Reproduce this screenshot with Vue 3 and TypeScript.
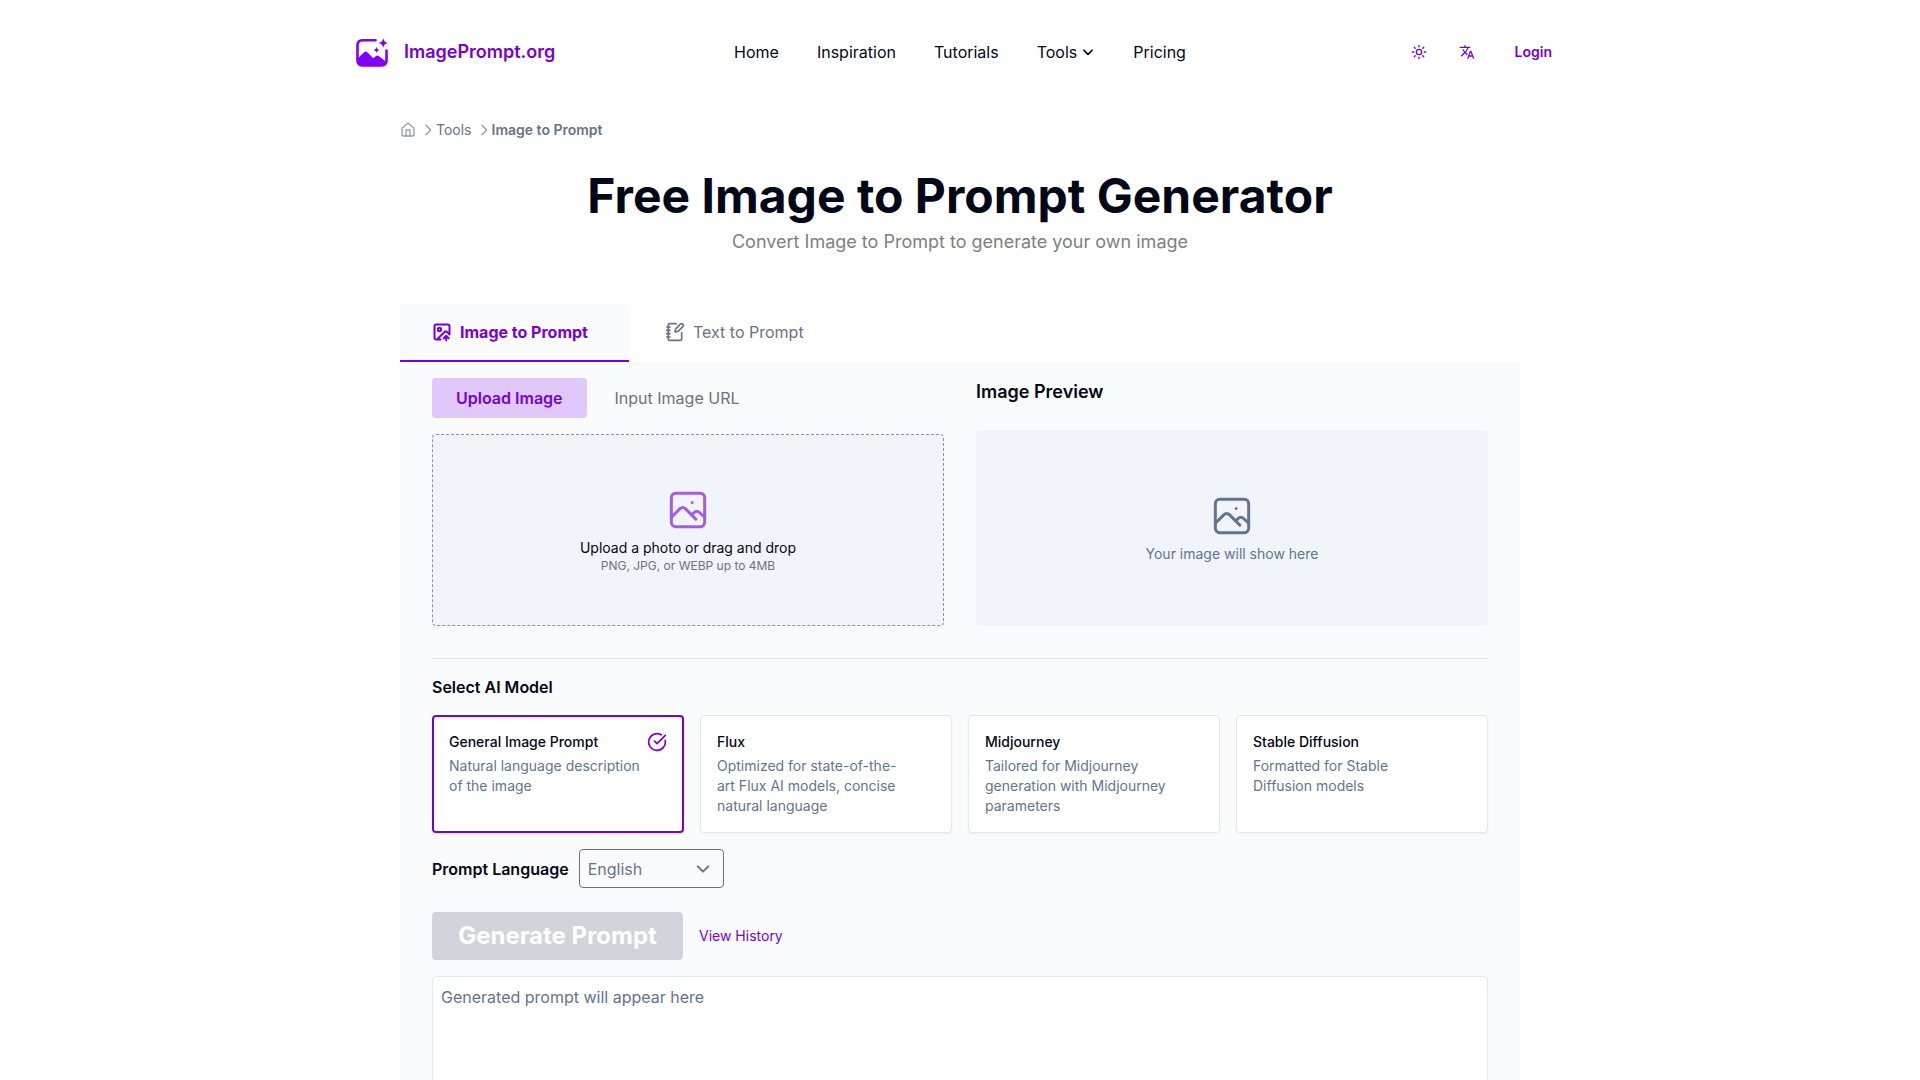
<script setup lang="ts">
import { ref } from 'vue'

interface Model {
  id: string
  name: string
  description: string
}

const models: Model[] = [
  { id: 'general', name: 'General Image Prompt', description: 'Natural language description of the image' },
  { id: 'flux', name: 'Flux', description: 'Optimized for state-of-the-art Flux AI models, concise natural language' },
  { id: 'midjourney', name: 'Midjourney', description: 'Tailored for Midjourney generation with Midjourney parameters' },
  { id: 'sd', name: 'Stable Diffusion', description: 'Formatted for Stable Diffusion models' },
]

const selectedModel = ref('general')
const language = ref('English')
const result = ref('')
</script>

<template>
  <div class="page">
    <header class="header">
      <a class="brand" href="#">
        <svg class="logo" viewBox="0 0 32 32" aria-hidden="true">
          <path d="M19.500 4.200H6a4.500 4.500 0 0 0-4.500 4.500V25a4.500 4.500 0 0 0 4.500 4.500h20a4.500 4.500 0 0 0 4.500-4.500V14.500" fill="none" stroke="currentColor" stroke-width="2.600" stroke-linecap="round" />
          <path d="M1.500 22.500l6.700-6.300c1-.9 2.200-.9 3.100 0l6 6.100 2.700-2.200c.9-.7 1.900-.7 2.700 0l7.800 6V26a4 4 0 0 1-4 4H5.500a4 4 0 0 1-4-4z" fill="currentColor" />
          <path d="M27.300 2c.8 3.400 1.600 4.200 5 5-3.400.8-4.200 1.600-5 5-.8-3.400-1.600-4.200-5-5 3.400-.8 4.200-1.600 5-5zM20.500 10.800c.5 2.200 1 2.700 3.200 3.200-2.200.5-2.700 1-3.200 3.200-.5-2.200-1-2.700-3.200-3.200 2.200-.5 2.700-1 3.200-3.200z" fill="currentColor" />
        </svg>
        <span>ImagePrompt.org</span>
      </a>
      <nav class="nav" aria-label="Main">
        <a href="#">Home</a>
        <a href="#">Inspiration</a>
        <a href="#">Tutorials</a>
        <button type="button" class="nav-menu">
          Tools
          <svg class="line" width="14" height="14" viewBox="0 0 24 24" stroke-width="3"><path d="m5 9 7 7 7-7" /></svg>
        </button>
        <a href="#">Pricing</a>
      </nav>
      <div class="actions">
        <button type="button" class="icon-button" aria-label="Toggle theme">
          <svg class="line" width="16" height="16" viewBox="0 0 24 24" stroke-width="2">
            <circle cx="12" cy="12" r="4" />
            <path d="M12 2v2M12 20v2M4.900 4.900l1.400 1.400M17.700 17.700l1.400 1.400M2 12h2M20 12h2M6.300 17.700l-1.400 1.400M19.100 4.900l-1.400 1.400" />
          </svg>
        </button>
        <button type="button" class="icon-button" aria-label="Change language">
          <svg width="16" height="16" viewBox="0 0 24 24" fill="currentColor">
            <path d="M12.870 15.070l-2.540-2.510.03-.03c1.740-1.940 2.980-4.170 3.710-6.530H17V4h-7V2H8v2H1v1.990h11.170C11.500 7.920 10.440 9.750 9 11.350 8.070 10.320 7.300 9.190 6.690 8h-2c.73 1.630 1.730 3.170 2.980 4.560l-5.090 5.020L4 19l5-5 3.110 3.110.76-2.040zM18.500 10h-2L12 22h2l1.120-3h4.750L21 22h2l-4.500-12zm-2.620 7l1.620-4.330L19.120 17h-3.240z" />
          </svg>
        </button>
        <a class="login" href="#">Login</a>
      </div>
    </header>

    <main class="main">
      <nav class="crumbs" aria-label="Breadcrumb">
        <a href="#" aria-label="Home">
          <svg class="line faint" width="16" height="16" viewBox="0 0 24 24" stroke-width="2">
            <path d="M15 21v-8a1 1 0 0 0-1-1h-4a1 1 0 0 0-1 1v8" />
            <path d="M3 10a2 2 0 0 1 .709-1.528l7-6a2 2 0 0 1 2.582 0l7 6A2 2 0 0 1 21 10v9a2 2 0 0 1-2 2H5a2 2 0 0 1-2-2z" />
          </svg>
        </a>
        <svg class="line faint separator" width="16" height="16" viewBox="0 0 24 24" stroke-width="2"><path d="m9 19 7-7-7-7" /></svg>
        <a href="#">Tools</a>
        <svg class="line faint separator" width="16" height="16" viewBox="0 0 24 24" stroke-width="2"><path d="m9 19 7-7-7-7" /></svg>
        <span class="current">Image to Prompt</span>
      </nav>

      <h1>Free Image to Prompt Generator</h1>
      <p class="subtitle">Convert Image to Prompt to generate your own image</p>

      <div class="tabs">
        <button type="button" class="tab active">
          <svg class="line" width="20" height="20" viewBox="0 0 24 24" stroke-width="2.400">
            <path d="M10.300 21H5a2 2 0 0 1-2-2V5a2 2 0 0 1 2-2h14a2 2 0 0 1 2 2v10l-3.100-3.100a2 2 0 0 0-2.814.014L6 21" />
            <path d="m14 19.500 3-3 3 3M17 22v-5.500" />
            <circle cx="9" cy="9" r="2" />
          </svg>
          Image to Prompt
        </button>
        <button type="button" class="tab">
          <svg class="line" width="20" height="20" viewBox="0 0 24 24" stroke-width="2">
            <path d="M13.400 2H6a2 2 0 0 0-2 2v16a2 2 0 0 0 2 2h12a2 2 0 0 0 2-2v-7.400" />
            <path d="M2 6h4M2 10h4M2 14h4M2 18h4" />
            <path d="M21.378 5.626a1 1 0 1 0-3.004-3.004l-5.010 5.012a2 2 0 0 0-.506.854l-.837 2.870a.5.5 0 0 0 .620.620l2.870-.837a2 2 0 0 0 .854-.506z" />
          </svg>
          Text to Prompt
        </button>
      </div>

      <section class="panel">
        <div class="columns">
          <div class="source">
            <div class="switch">
              <button type="button" class="pill active">Upload Image</button>
              <button type="button" class="pill">Input Image URL</button>
            </div>
            <label class="dropzone">
              <input class="visually-hidden" type="file" accept="image/png,image/jpeg,image/webp" />
              <svg class="line picture" width="40" height="40" viewBox="0 0 24 24" stroke-width="1.800">
                <rect x="2" y="2" width="20" height="20" rx="2.600" />
                <path d="m2.200 16.200 5-5c1-.9 2.200-.9 3.200 0l6.300 6.300M14.200 15l1.500-1.500c1-.9 2.200-.9 3.200 0L22 16.300" />
                <path d="M14.500 7.500h.01" />
              </svg>
              <span class="drop-title">Upload a photo or drag and drop</span>
              <span class="drop-hint">PNG, JPG, or WEBP up to 4MB</span>
            </label>
          </div>
          <div class="preview">
            <h2>Image Preview</h2>
            <div class="preview-box">
              <svg class="line" width="40" height="40" viewBox="0 0 24 24" stroke-width="1.800">
                <rect x="2" y="2" width="20" height="20" rx="2.600" />
                <path d="m2.200 16.200 5-5c1-.9 2.200-.9 3.200 0l6.300 6.300M14.200 15l1.500-1.500c1-.9 2.200-.9 3.200 0L22 16.300" />
                <path d="M14.500 7.500h.01" />
              </svg>
              <span>Your image will show here</span>
            </div>
          </div>
        </div>

        <hr />

        <h3 id="model-heading">Select AI Model</h3>
        <div class="models" role="radiogroup" aria-labelledby="model-heading">
          <label v-for="m in models" :key="m.id" class="card" :class="{ selected: m.id === selectedModel }">
            <input v-model="selectedModel" class="visually-hidden" type="radio" name="model" :value="m.id" />
            <span class="card-text">
              <span class="card-name">{{ m.name }}</span>
              <span class="card-description">{{ m.description }}</span>
            </span>
            <svg v-if="m.id === selectedModel" class="line check" width="20" height="20" viewBox="0 0 24 24" stroke-width="2">
              <path d="M21.801 10A10 10 0 1 1 17 3.335" />
              <path d="m9 11 3 3L22 4" />
            </svg>
          </label>
        </div>

        <div class="language">
          <label for="language">Prompt Language</label>
          <span class="select">
            <select id="language" v-model="language">
              <option>English</option>
            </select>
            <svg class="line" width="16" height="16" viewBox="0 0 24 24" stroke-width="3"><path d="m4 8 8 8 8-8" /></svg>
          </span>
        </div>

        <div class="generate">
          <button type="button" class="generate-button" disabled>Generate Prompt</button>
          <a href="#">View History</a>
        </div>

        <textarea v-model="result" aria-label="Generated prompt" placeholder="Generated prompt will appear here"></textarea>
      </section>
    </main>
  </div>
</template>

<style>
body {
  margin: 0;
  background: #fff;
}
</style>

<style scoped>
.page {
  --purple: #7500d9;
  --ink: #020817;
  --slate: #64748b;
  --gray: #6b7280;
  font-family: Inter, "Liberation Sans", sans-serif;
  font-size: 16px;
  line-height: 24px;
  color: var(--ink);
}

.page *,
.page *::before {
  box-sizing: border-box;
}

button,
select,
textarea {
  font: inherit;
  color: inherit;
  margin: 0;
}

button {
  background: none;
  border: 0;
  padding: 0;
  cursor: pointer;
}

a {
  color: inherit;
  text-decoration: none;
}

h1,
h2,
h3,
p {
  margin: 0;
}

svg {
  display: block;
  flex: none;
}

.line {
  fill: none;
  stroke: currentColor;
  stroke-linecap: round;
  stroke-linejoin: round;
}

.faint {
  opacity: 0.7;
}

.visually-hidden {
  position: absolute;
  width: 1px;
  height: 1px;
  margin: 0;
  opacity: 0;
}

.header {
  display: grid;
  grid-template-columns: 1fr auto 1fr;
  align-items: center;
  max-width: 1240px;
  height: 104px;
  margin: 0 auto;
  padding: 0 16px;
}

.brand {
  display: flex;
  align-items: center;
  gap: 16px;
  font-size: 18px;
  font-weight: 600;
  color: var(--purple);
}

.logo {
  width: 32px;
  height: 32px;
  color: #8000ff;
}

.nav {
  display: flex;
  align-items: center;
  gap: 38px;
}

.nav-menu {
  display: flex;
  align-items: center;
  gap: 4px;
}

.actions {
  display: flex;
  align-items: center;
  justify-content: flex-end;
  color: var(--purple);
}

.icon-button {
  display: flex;
  align-items: center;
  justify-content: center;
  width: 48px;
  height: 40px;
}

.login {
  padding: 8px 12px 8px 24px;
  font-size: 14px;
  font-weight: 600;
}

.main {
  max-width: 1120px;
  margin: 0 auto;
}

.crumbs {
  display: flex;
  align-items: center;
  height: 52px;
  font-size: 14px;
  color: var(--gray);
}

.separator {
  margin-left: 4px;
}

.current {
  font-weight: 600;
}

h1 {
  margin-top: 16px;
  font-size: 48px;
  line-height: 48px;
  font-weight: 700;
  text-align: center;
}

.subtitle {
  margin-top: 8px;
  font-size: 18px;
  line-height: 28px;
  text-align: center;
  color: #808080;
}

.tabs {
  display: flex;
  margin-top: 48px;
}

.tab {
  display: flex;
  align-items: center;
  gap: 8px;
  height: 58px;
  padding: 0 32px 0 36px;
  border-bottom: 2px solid transparent;
  color: var(--gray);
}

.tab.active {
  min-width: 229px;
  padding: 0 32px;
  background: #fafbfd;
  border-color: var(--purple);
  border-radius: 4px 4px 0 0;
  color: var(--purple);
  font-weight: 700;
}

.panel {
  padding: 16px 32px 32px;
  background: #fafbfd;
}

.columns {
  display: grid;
  grid-template-columns: 1fr 1fr;
  gap: 32px;
}

.source,
.preview {
  display: flex;
  flex-direction: column;
}

.switch {
  display: flex;
  gap: 4px;
}

.pill {
  height: 40px;
  padding: 0 24px;
  border-radius: 4px;
  color: var(--gray);
}

.pill.active {
  background: #e0c8fa;
  color: var(--purple);
  font-weight: 600;
}

.dropzone {
  position: relative;
  display: flex;
  flex-direction: column;
  align-items: center;
  justify-content: center;
  height: 192px;
  margin-top: 16px;
  padding-top: 4px;
  background: #f1f5f9;
  border: 1px dashed #8b939e;
  border-radius: 4px;
  cursor: pointer;
}

.picture {
  color: #a35be8;
}

.drop-title {
  margin-top: 8px;
  font-size: 14px;
  line-height: 20px;
}

.drop-hint {
  font-size: 12px;
  line-height: 16px;
  color: var(--gray);
}

h2 {
  font-size: 18px;
  line-height: 28px;
  font-weight: 600;
}

.preview-box {
  display: flex;
  flex: 1;
  flex-direction: column;
  align-items: center;
  justify-content: center;
  gap: 8px;
  margin-top: 24px;
  padding-top: 4px;
  background: #f1f5f9;
  border-radius: 2px;
  font-size: 14px;
  line-height: 20px;
  color: var(--slate);
}

hr {
  height: 1px;
  margin: 32px 0 16px;
  border: 0;
  background: #e2e8ea;
}

h3 {
  font-size: 16px;
  line-height: 24px;
  font-weight: 600;
}

.models {
  display: grid;
  grid-template-columns: repeat(4, 1fr);
  gap: 16px;
  margin-top: 16px;
}

.card {
  position: relative;
  display: flex;
  align-items: flex-start;
  justify-content: space-between;
  min-height: 118px;
  padding: 16px;
  background: #fff;
  border: 1px solid #e2e8ea;
  border-radius: 4px;
  box-shadow: 0 1px 2px rgba(0, 0, 0, 0.05);
  font-size: 14px;
  line-height: 20px;
  cursor: pointer;
}

.card.selected {
  padding: 15px;
  border: 2px solid var(--purple);
}

.card-text {
  display: flex;
  flex-direction: column;
  gap: 4px;
  max-width: 194px;
}

.card-name {
  font-weight: 500;
}

.card-description {
  color: var(--slate);
}

.check {
  position: absolute;
  top: 15px;
  right: 15px;
  color: var(--purple);
}

.language {
  display: flex;
  align-items: center;
  gap: 10px;
  margin-top: 16px;
}

.language label {
  font-weight: 600;
}

.select {
  position: relative;
  display: flex;
}

.select select {
  width: 145px;
  height: 39px;
  padding: 0 8px;
  appearance: none;
  background: #fafbfd;
  border: 1px solid var(--gray);
  border-radius: 4px;
  color: var(--slate);
}

.select svg {
  position: absolute;
  top: 12px;
  right: 13px;
  color: var(--gray);
  pointer-events: none;
}

.generate {
  display: flex;
  align-items: center;
  gap: 16px;
  margin-top: 24px;
  font-size: 14px;
  color: var(--purple);
}

.generate-button {
  min-width: 251px;
  height: 48px;
  padding: 0 24px;
  background: #d1d5db;
  border-radius: 4px;
  font-size: 24px;
  font-weight: 700;
  color: #fff;
}

textarea {
  display: block;
  width: 100%;
  height: 200px;
  margin-top: 16px;
  padding: 8px;
  background: #fff;
  border: 1px solid #e2e8ea;
  border-radius: 4px;
  resize: none;
}

textarea::placeholder {
  color: var(--slate);
  opacity: 1;
}
</style>
